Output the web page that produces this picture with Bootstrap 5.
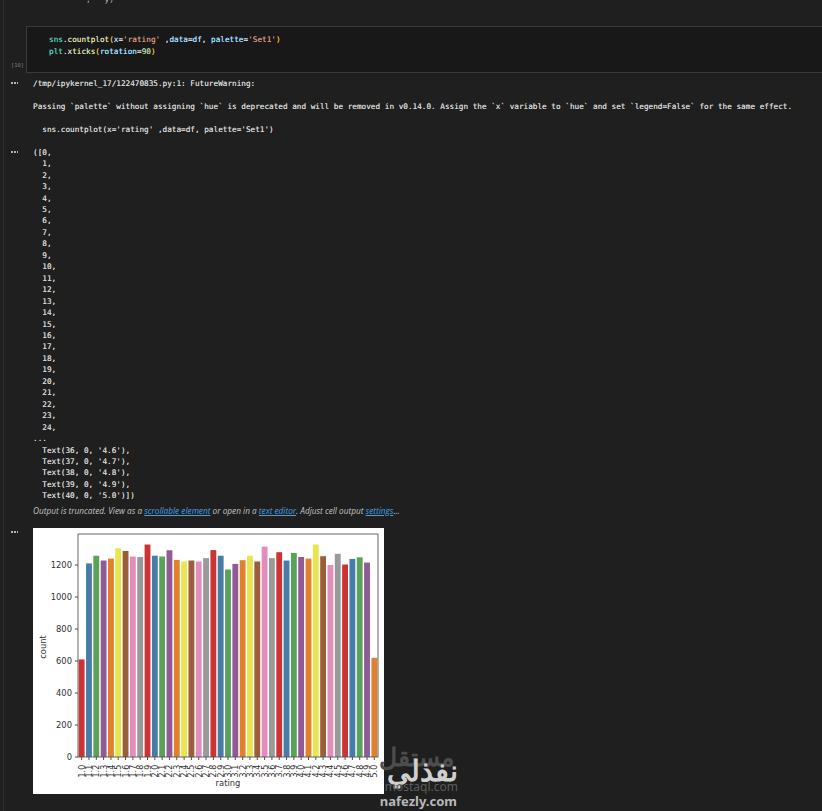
<!DOCTYPE html>
<html lang="en">
<head>
<meta charset="utf-8">
<title>Notebook</title>
<link href="https://cdn.jsdelivr.net/npm/bootstrap@5.3.0/dist/css/bootstrap.min.css" rel="stylesheet">
<style>
html,body{height:811px;overflow:hidden;background:#1f1f1f;}
body{font-family:"DejaVu Sans Mono","Liberation Mono",monospace;font-size:7.7px;line-height:11.45px;color:#d2d2d2;font-weight:400;}
.nb-rail{width:26px;flex:none;border-left:1px solid #2e2e2e;margin-left:3px;}
.nb-page{height:811px;}
.nb-frag{height:32px;padding-left:57px;margin-top:-6px;color:#bbb;white-space:pre;}
.nb-main{min-width:0;}
.nb-cell{height:47px;background:#181818;border:solid #3a3a3a;border-width:1px 0 1px 1px;padding:7px 0 0 22px;margin-left:-3px;white-space:pre;line-height:12px;text-shadow:0 0 .5px currentColor;}
.nb-count{position:absolute;left:11px;top:60px;font-size:5.4px;color:#7d7d7d;}
.nb-dots{position:absolute;left:11px;width:7px;height:2px;background:radial-gradient(circle at 1px 1px,#b5b5b5 1px,transparent 1.1px) 0 0/3px 2px repeat-x;}
.nb-dot1{top:82px}.nb-dot2{top:151px}.nb-dot3{top:531px}
.nb-out{white-space:pre;padding-left:4px;padding-top:5px;text-shadow:0 0 .5px currentColor;}
.nb-trunc{font-family:"Open Sans",sans-serif;font-style:italic;font-size:8.25px;color:#c4c4c4;line-height:12px;padding-top:3px;text-shadow:none;}
.nb-trunc a{color:#4a9fe0;}
.nb-plot{display:block;width:351px;height:266px;background:#fff;margin-left:4px;margin-top:11px;}
.c-g{color:#4ec9b0}.c-y{color:#dcdcaa}.c-b{color:#9cdcfe}.c-o{color:#ce9178}.c-p{color:#e5b93c}.c-w{color:#d4d4d4}.c-n{color:#b5cea8}
.nb-mark{position:absolute;right:364px;font-family:"Noto Sans","Noto Sans CJK SC",sans-serif;white-space:nowrap;}
.nb-m0{top:741px;font-size:25px;line-height:30px;color:#4d4d4d;font-weight:700;right:368px;}
.nb-m1{top:751px;font-size:29px;line-height:38px;color:#cfcfcf;font-weight:700;}
.nb-m2{top:780px;font-size:12px;line-height:14px;color:#5c5c5c;}
.nb-m3{top:792px;font-size:13px;line-height:18px;color:#b8b8b8;font-weight:700;right:365px;}
</style>
</head>
<body>
<div class="d-flex nb-page position-relative">
  <div class="nb-rail"></div>
  <div class="nb-main flex-grow-1">
    <div class="nb-frag">,   y)</div>
    <div class="nb-cell"><span class="c-g">sns</span><span class="c-w">.</span><span class="c-y">countplot</span><span class="c-p">(</span><span class="c-b">x</span><span class="c-w">=</span><span class="c-o">'rating'</span><span class="c-w"> ,</span><span class="c-b">data</span><span class="c-w">=</span><span class="c-b">df</span><span class="c-w">, </span><span class="c-b">palette</span><span class="c-w">=</span><span class="c-o">'Set1'</span><span class="c-p">)</span>
<span class="c-g">plt</span><span class="c-w">.</span><span class="c-y">xticks</span><span class="c-p">(</span><span class="c-b">rotation</span><span class="c-w">=</span><span class="c-n">90</span><span class="c-p">)</span></div>
    <div class="nb-out">/tmp/ipykernel_17/122470835.py:1: FutureWarning:

Passing `palette` without assigning `hue` is deprecated and will be removed in v0.14.0. Assign the `x` variable to `hue` and set `legend=False` for the same effect.

  sns.countplot(x='rating' ,data=df, palette='Set1')

([0,
  1,
  2,
  3,
  4,
  5,
  6,
  7,
  8,
  9,
  10,
  11,
  12,
  13,
  14,
  15,
  16,
  17,
  18,
  19,
  20,
  21,
  22,
  23,
  24,
...
  Text(36, 0, '4.6'),
  Text(37, 0, '4.7'),
  Text(38, 0, '4.8'),
  Text(39, 0, '4.9'),
  Text(40, 0, '5.0')])</div>
    <div class="nb-out nb-trunc">Output is truncated. View as a <a href="#">scrollable element</a> or open in a <a href="#">text editor</a>. Adjust cell output <a href="#">settings</a>...</div>
    <svg class="nb-plot" id="plot" viewBox="33 528 351 266"></svg>
  </div>
  <div class="nb-count">[10]</div>
  <div class="nb-dots nb-dot1"></div>
  <div class="nb-dots nb-dot2"></div>
  <div class="nb-dots nb-dot3"></div>
  <div class="nb-mark nb-m0">مستقل</div>
  <div class="nb-mark nb-m1">نفذلي</div>
  <div class="nb-mark nb-m2">mostaql.com</div>
  <div class="nb-mark nb-m3">nafezly.com</div>
</div>
<script src="https://cdn.jsdelivr.net/npm/bootstrap@5.3.0/dist/js/bootstrap.bundle.min.js"></script>
<script>
var vals=[610,1210,1258,1228,1240,1305,1288,1253,1250,1328,1258,1253,1292,1232,1222,1228,1222,1243,1293,1258,1172,1207,1230,1258,1222,1315,1243,1280,1228,1275,1250,1240,1328,1255,1200,1270,1203,1238,1248,1215,620];
var cols=['#cb3335','#477ca8','#59a257','#905998','#e1812c','#eae44e','#9a5f3a','#e28dbd','#999999'];
var L=78,R=378,T=534,B=757,w=(R-L)/41,s='';
var F='font-family="DejaVu Sans" fill="#303030"';
vals.forEach(function(v,i){
  var x=L+i*w,h=v*0.16,cx=x+w/2;
  s+='<rect x="'+(x+w*0.1)+'" y="'+(B-h)+'" width="'+(w*0.8)+'" height="'+h+'" fill="'+cols[i%9]+'"/>';
  s+='<line x1="'+cx+'" x2="'+cx+'" y1="'+B+'" y2="'+(B+3)+'" stroke="#222" stroke-width=".8"/>';
  s+='<text transform="translate('+(cx+3)+' '+(B+20.5)+') rotate(-90)" font-size="8" '+F+'>'+(1+i/10).toFixed(1)+'</text>';
});
for(var y=0;y<=1200;y+=200){
  var py=B-y*0.16;
  s+='<line x1="'+(L-3)+'" x2="'+L+'" y1="'+py+'" y2="'+py+'" stroke="#222" stroke-width=".8"/>';
  s+='<text x="'+(L-6)+'" y="'+(py+3.2)+'" text-anchor="end" font-size="8.4" '+F+'>'+y+'</text>';
}
s+='<rect x="'+L+'" y="'+T+'" width="'+(R-L)+'" height="'+(B-T)+'" fill="none" stroke="#555" stroke-width=".9"/>';
s+='<text transform="translate(46 647) rotate(-90)" text-anchor="middle" font-size="8.4" '+F+'>count</text>';
s+='<text x="228" y="786" text-anchor="middle" font-size="8.4" '+F+'>rating</text>';
document.getElementById('plot').innerHTML=s;
</script>
</body>
</html>
